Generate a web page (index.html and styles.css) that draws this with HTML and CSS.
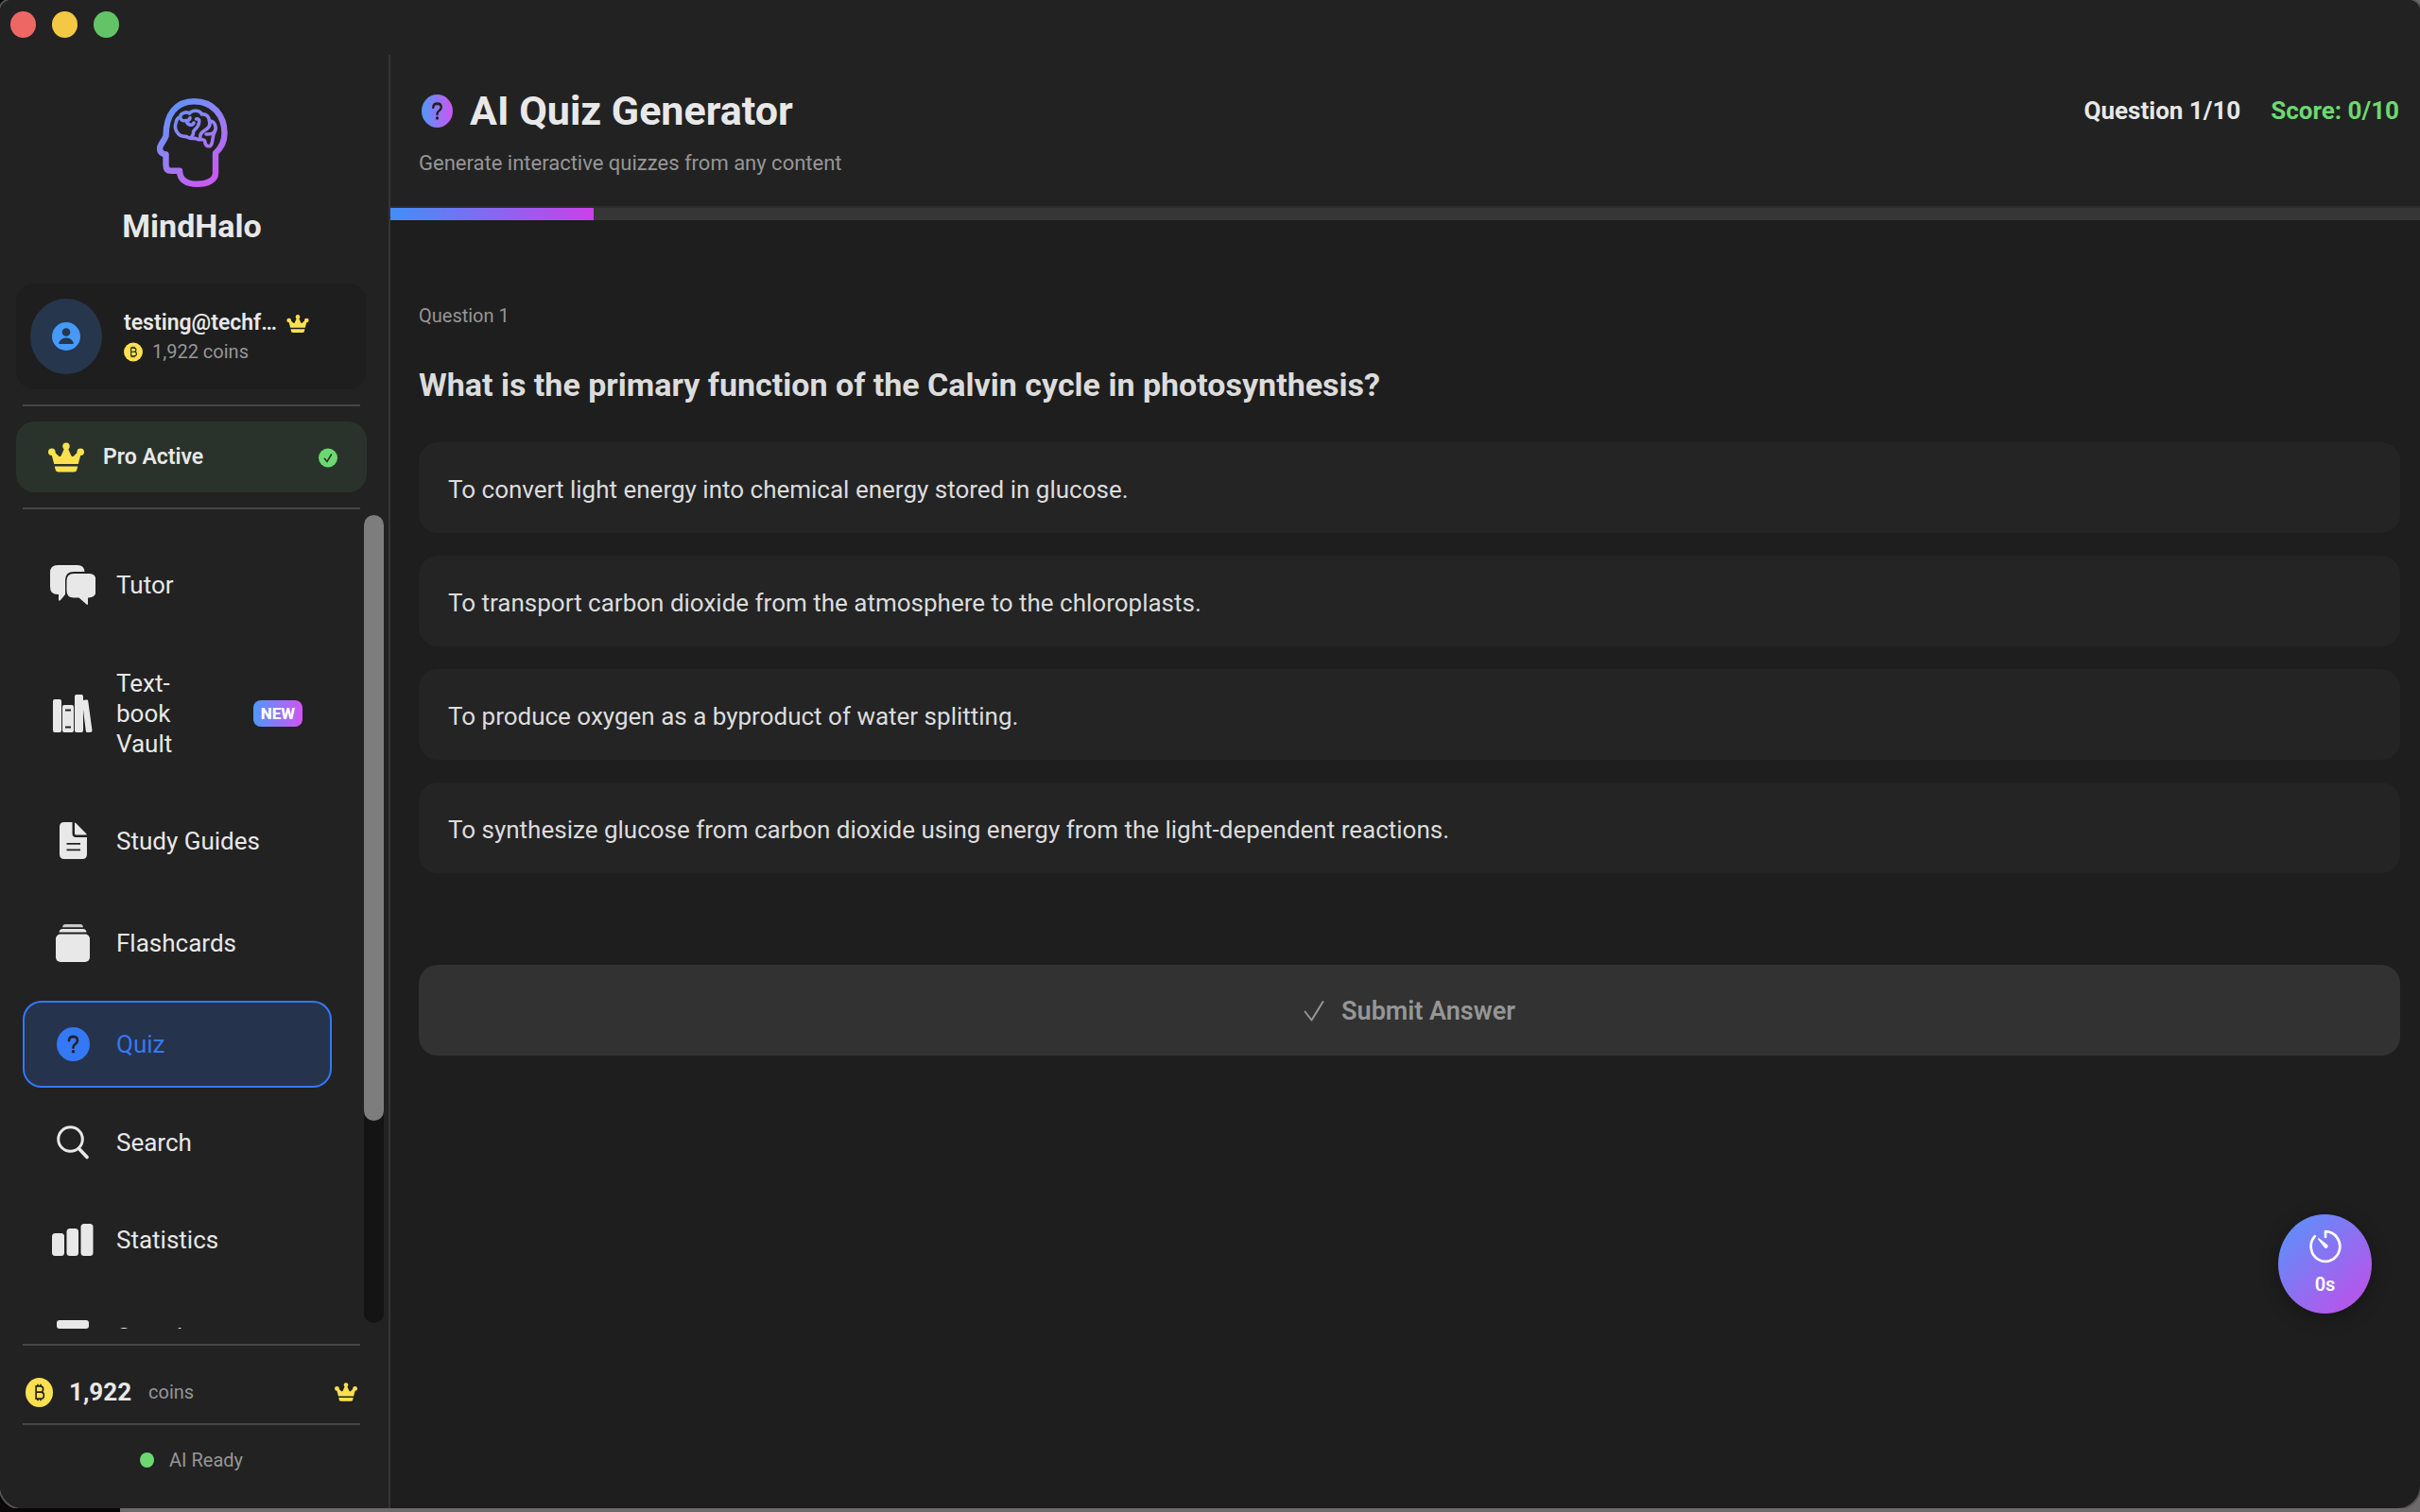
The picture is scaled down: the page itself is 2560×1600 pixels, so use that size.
FILE: index.html
```html
<!DOCTYPE html>
<html lang="en">
<head>
<meta charset="utf-8">
<meta name="viewport" content="width=device-width, initial-scale=1">
<title>MindHalo – AI Quiz Generator</title>
<link rel="stylesheet" href="styles.css">
</head>
<body>
<svg class="defs" width="0" height="0" aria-hidden="true">
  <defs>
    <symbol id="crown" viewBox="0 0 38 31">
      <circle cx="19" cy="3.7" r="3.7"/><circle cx="3.8" cy="9.8" r="3.8"/><circle cx="34.2" cy="9.8" r="3.8"/>
      <path d="M6.2 22.5 3.2 11l3-1.6 5.6 5.4 1.7-.7L18 4h2l4.500 10.100 1.700.7 5.600-5.400 3 1.600-3 11.500z"/>
      <path d="M6.800 25h24.400l-.8 3.500q-.6 2.500-3.400 2.500H11q-2.800 0-3.400-2.500z"/>
    </symbol>
    <symbol id="coin" viewBox="0 0 30 30">
      <circle cx="15" cy="15" r="15"/>
      <path d="M11.500 8.500h4.500q3.300 0 3.300 3.100T16 14.700h-4.500zm0 6.200h5q3.600 0 3.600 3.400t-3.600 3.400h-5zM13.500 6.500v2m3-2v2m-3 13v2m3-2v2" fill="none" stroke="#222" stroke-width="1.700"/>
    </symbol>
    <symbol id="question" viewBox="0 0 36 36">
      <circle cx="18" cy="18" r="18"/>
      <path class="cut" d="M13.300 14.200q.3-4.300 4.800-4.300 4.500.1 4.500 4 0 2.300-2.500 3.900-2.100 1.400-2.100 3.300v.6" fill="none" stroke-width="2.600" stroke-linecap="round"/>
      <circle class="cut-dot" cx="18" cy="25.800" r="1.800"/>
    </symbol>
  </defs>
</svg>

<div class="window">
  <aside class="sidebar">
    <div class="titlebar">
      <button class="light light-close" aria-label="Close"></button>
      <button class="light light-min" aria-label="Minimize"></button>
      <button class="light light-zoom" aria-label="Zoom"></button>
    </div>
    <div class="side-body">
      <div class="brand">
        <svg class="brand-logo" viewBox="0 0 75 94" preserveAspectRatio="none" fill="none" aria-hidden="true">
          <defs><linearGradient id="logoGrad" x1="0" y1="0" x2="75" y2="94" gradientUnits="userSpaceOnUse"><stop offset=".12" stop-color="#6290fb"/><stop offset=".45" stop-color="#9282f5"/><stop offset=".85" stop-color="#c75bf2"/></linearGradient></defs>
          <path d="M9.500 40C9.500 17 20 3.200 39.500 3.200S71.500 18 71.500 37c0 8-3.500 15.500-9.500 21v21c0 8-9 11.800-19.500 11.800S24 87 24 76.800h-9c-4 0-5.500-2.300-5.500-6V59.500C6 59 3 57 3 53c0-4 4.500-7.500 6.500-13z" stroke="url(#logoGrad)" stroke-width="6.400" stroke-linejoin="round"/>
          <g stroke="url(#logoGrad)" stroke-width="3.600" stroke-linecap="round" stroke-linejoin="round">
            <path d="M24.500 20c0-4.500 7.500-6.500 10-4 3-4.500 11.500-3 13 1 4.500-1 8 3 8 7 6 0 8.500 7.500 5 12-1.500 5-1.500 9-2.500 12-1.500 4-5.500 3.500-7-.5 0-2.500-.5-4-3.500-3.800-5.500.5-4-.5-7.500-1.500-8 1.500-6.500-2-10.500-1.800-8 .2-11.500-9-9.500-14 .5-3.200 2-6 4.500-6.400z"/>
            <path d="M24.500 20c.5 3 3 4.500 6.500 3.500 3 .5 4-2 4-3M31 23.500c1.500 6 7 5.500 8 2.500M41.500 22c5-1 3 4.500 2 7-2 4-5 4-5 7.500 0 3-1 3-3 5.500M55.500 24c2 6-2.500 8.500-6.500 11-2.500 2-4 4-3 7.500M61 36c-3 2.500-4.500 2-9 2"/>
          </g>
        </svg>
        <h2 class="brand-name">MindHalo</h2>
      </div>

      <section class="user-card">
        <span class="avatar">
          <svg width="30" height="30" viewBox="0 0 30 30" aria-hidden="true"><circle cx="15" cy="15" r="15" fill="#4699f7"/><circle cx="15" cy="10.500" r="4.300" fill="#26364c"/><path d="M7.500 23q-.8-.8.300-2.500Q10.300 16.500 15 16.500t7.200 4q1.100 1.700.3 2.500z" fill="#26364c"/></svg>
        </span>
        <div class="user-info">
          <div class="user-name">testing@techf…<svg class="gold" width="24" height="19" aria-hidden="true"><use href="#crown"/></svg></div>
          <div class="user-coins"><svg class="gold" width="20" height="21" aria-hidden="true"><use href="#coin"/></svg>1,922 coins</div>
        </div>
      </section>
      <hr class="rule">
      <section class="pro">
        <svg class="gold" width="38" height="32" aria-hidden="true"><use href="#crown"/></svg>
        <span class="pro-text">Pro Active</span>
        <svg width="20" height="21" viewBox="0 0 20 20" aria-hidden="true"><circle cx="10" cy="10" r="10" fill="#6cd970"/><path d="m6.300 10.800 2.700 3 4.500-7.300" fill="none" stroke="#2a332b" stroke-width="1.600" stroke-linecap="round"/></svg>
      </section>
      <hr class="rule">

      <div class="nav-area">
        <nav class="nav">
          <a class="nav-item" href="#tutor">
            <svg class="nav-icon" width="48" height="42" viewBox="0 0 48 42" aria-hidden="true"><path d="M8 0h21q7 0 7.500 7H25q-9 0-9 9v15l-5 6q-2 1.500-2-.5V31H8q-8 0-8-8V8q0-8 8-8z"/><path d="M25 9h16q7.500 0 7.500 7.500V27q0 7.500-7.500 7.500h-1V41q0 1.500-1.500.5l-8-7H25q-7.500 0-7.500-7.500V16.500Q17.500 9 25 9z"/></svg>
            <span class="nav-label">Tutor</span>
          </a>
          <a class="nav-item" href="#vault">
            <svg class="nav-icon" width="42" height="40" viewBox="0 0 42 40" aria-hidden="true"><rect x="0" y="5" width="9" height="35" rx="2"/><path fill-rule="evenodd" d="M12 11h8q2 0 2 2v25q0 2-2 2h-8q-2 0-2-2V13q0-2 2-2zm1 4.500v2h6v-2zm0 18v2h6v-2z"/><rect x="23" y="0" width="9" height="40" rx="2"/><path d="m31.500 6 4-.6q1.500-.2 1.700 1.300L41.500 38q.2 1.600-1.300 1.800l-3.700.2q-1.500 0-1.700-1.500L31 8q-.2-1.800.500-2z"/></svg>
            <span class="nav-label nav-label-narrow">Text&shy;book Vault</span>
            <span class="badge">NEW</span>
          </a>
          <a class="nav-item" href="#guides">
            <svg class="nav-icon" width="29" height="39" viewBox="0 0 29 39" aria-hidden="true"><path fill-rule="evenodd" d="M5 0h8.500v12q0 4 4 4H29v18q0 5-5 5H5q-5 0-5-5V5q0-5 5-5zm2.500 22v1.800h14.500V22zm0 6.500v1.800h14.500v-1.800z"/><path d="M16 .5q.8 0 1.500.8L28 12q.7.700.7 1.500H17.500q-1.500 0-1.500-1.500z"/></svg>
            <span class="nav-label">Study Guides</span>
          </a>
          <a class="nav-item nav-item-tall" href="#flashcards">
            <svg class="nav-icon" width="36" height="40" viewBox="0 0 36 40" aria-hidden="true"><rect y="10.500" width="36" height="29.500" rx="5"/><path d="M7 3.300Q7.500 0 10 0h16q2.500 0 3 3.300z" opacity=".85"/><path d="M3.500 8.500Q4 5 7 5h22q3 0 3.500 3.500z"/></svg>
            <span class="nav-label">Flashcards</span>
          </a>
          <a class="nav-item nav-item-active" href="#quiz" aria-current="page">
            <svg class="nav-icon" width="35" height="36" viewBox="0 0 36 36" preserveAspectRatio="none" aria-hidden="true"><use href="#question"/></svg>
            <span class="nav-label">Quiz</span>
          </a>
          <a class="nav-item" href="#search">
            <svg class="nav-icon nav-icon-line" width="34" height="36" viewBox="0 0 34 36" aria-hidden="true"><circle cx="14.500" cy="14.500" r="12.800" stroke-width="3"/><path d="m23.500 24.500 8.500 9" stroke-width="3.600" stroke-linecap="round"/></svg>
            <span class="nav-label">Search</span>
          </a>
          <a class="nav-item" href="#statistics">
            <svg class="nav-icon" width="44" height="34" viewBox="0 0 44 34" aria-hidden="true"><rect y="10" width="13" height="24" rx="3.500"/><rect x="15.500" y="5" width="12.500" height="29" rx="3.500"/><rect x="30.500" width="13" height="34" rx="3.500"/></svg>
            <span class="nav-label">Statistics</span>
          </a>
          <a class="nav-item" href="#saved">
            <svg class="nav-icon" width="34" height="36" viewBox="0 0 34 36" aria-hidden="true"><rect width="34" height="9" rx="3"/><path d="M2 12h30v18q0 6-6 6H8q-6 0-6-6z"/></svg>
            <span class="nav-label">Saved</span>
          </a>
        </nav>
        <div class="scrollbar" aria-hidden="true"><div class="scroll-thumb"></div></div>
      </div>

      <hr class="rule">
      <div class="balance">
        <svg class="gold" width="29" height="31" viewBox="0 0 30 30" preserveAspectRatio="none" aria-hidden="true"><use href="#coin"/></svg>
        <strong class="balance-value">1,922</strong>
        <span class="balance-unit">coins</span>
        <svg class="gold" width="24" height="20" aria-hidden="true"><use href="#crown"/></svg>
      </div>
      <hr class="rule">
      <div class="status"><span class="status-dot"></span>AI Ready</div>
    </div>
  </aside>

  <main class="main">
    <header class="header">
      <div class="header-row">
        <svg width="33" height="35" viewBox="0 0 36 36" preserveAspectRatio="none" class="title-icon" aria-hidden="true">
          <defs><linearGradient id="titleGrad"><stop stop-color="#4f98fa"/><stop offset="1" stop-color="#cf55f0"/></linearGradient></defs>
          <use href="#question" fill="url(#titleGrad)"/>
        </svg>
        <h1 class="title">AI Quiz Generator</h1>
        <span class="counter">Question 1/10</span>
        <span class="counter counter-score">Score: 0/10</span>
      </div>
      <p class="subtitle">Generate interactive quizzes from any content</p>
    </header>
    <div class="progress" role="progressbar" aria-valuenow="10" aria-valuemin="0" aria-valuemax="100" aria-label="Quiz progress"><div class="progress-fill" style="width:10%"></div></div>

    <section class="quiz">
      <p class="quiz-index">Question 1</p>
      <h2 class="quiz-question">What is the primary function of the Calvin cycle in photosynthesis?</h2>
      <div class="options">
        <button class="option">To convert light energy into chemical energy stored in glucose.</button>
        <button class="option">To transport carbon dioxide from the atmosphere to the chloroplasts.</button>
        <button class="option">To produce oxygen as a byproduct of water splitting.</button>
        <button class="option">To synthesize glucose from carbon dioxide using energy from the light-dependent reactions.</button>
      </div>
      <button class="submit" disabled>
        <svg width="22" height="24" viewBox="0 0 22 24" fill="none" aria-hidden="true"><path d="m1.500 12.500 7 9L20.500 2" stroke="#969696" stroke-width="2" stroke-linecap="round" stroke-linejoin="round"/></svg>
        Submit Answer
      </button>
    </section>
  </main>

  <button class="timer">
    <svg width="34" height="36" viewBox="0 0 34 36" fill="none" aria-hidden="true"><path d="M17 8V2.200A15.300 15.800 0 1 1 5.800 7.200" stroke="#fff" stroke-width="2.700" stroke-linecap="round" stroke-linejoin="round"/><path d="M9.300 9.600q.5-.5 1.200 0l8.500 6.700q1.300 1.500 0 3-1.500 1.300-3 0L9.300 10.800q-.5-.7 0-1.200z" fill="#fff"/></svg>
    0s
  </button>
</div>
</body>
</html>
```
FILE: styles.css
```css
* { box-sizing: border-box; }

body {
  margin: 0;
  background: linear-gradient(90deg, #0b0709 0 127px, #6c6a6b 127px);
  color: #e8e8e8;
  font-family: Roboto, sans-serif;
  font-size: 26px;
  line-height: 32px;
}

h1, h2, p { margin: 0; }
button { font: inherit; color: inherit; border: 0; padding: 0; cursor: pointer; }
svg { flex: none; }
.defs { position: absolute; }
.gold { fill: #fbe14f; }
.cut { stroke: #222; }
.cut-dot { fill: #222; }

.window {
  position: relative;
  display: flex;
  height: calc(100vh - 4px);
  border-radius: 12px 12px 24px 24px;
  box-shadow: 0 0 0 2px #565656;
  background: #1e1e1e;
  overflow: hidden;
}

/* Sidebar */
.sidebar {
  flex: none;
  width: 413px;
  display: flex;
  flex-direction: column;
  background: #222;
}
.titlebar { display: flex; gap: 17px; height: 58px; padding: 12px 11px; flex: none; }
.light { width: 27px; height: 28px; border-radius: 50%; }
.light-close { background: #ee6765; }
.light-min { background: #f4c844; }
.light-zoom { background: #62c466; }

.side-body {
  flex: 1;
  min-height: 0;
  display: flex;
  flex-direction: column;
  border-right: 2px solid #353535;
}
.brand {
  display: flex;
  flex-direction: column;
  align-items: center;
  padding: 46px 5px 40px 0;
  gap: 20px;
}
.brand-logo { width: 75px; height: 94px; }
.brand-name { font-size: 34px; line-height: 42px; font-weight: 700; }

.user-card {
  display: flex;
  align-items: center;
  gap: 23px;
  margin: 0 23px 16px 17px;
  padding: 16px 15px;
  border-radius: 20px;
  background: #1e1e1e;
}
.avatar {
  width: 76px;
  height: 80px;
  border-radius: 50%;
  background: #26364c;
  display: flex;
  align-items: center;
  justify-content: center;
}
.user-name { display: flex; align-items: center; gap: 10px; font-size: 23px; font-weight: 600; }
.user-coins { display: flex; align-items: center; gap: 10px; font-size: 20px; line-height: 28px; color: #969696; }

.rule { flex: none; width: 357px; height: 2px; margin: 0 0 0 24px; border: 0; background: #464646; }

.pro {
  display: flex;
  align-items: center;
  gap: 20px;
  margin: 16px 23px 16px 17px;
  padding: 1px 31px 0 34px;
  height: 75px;
  border-radius: 20px;
  background: #2a332b;
  font-size: 23px;
  font-weight: 600;
}
.pro-text { flex: 1; }

.nav-area { flex: 1; min-height: 0; display: flex; margin-bottom: 16px; overflow: hidden; }
.nav {
  flex: 1;
  display: flex;
  flex-direction: column;
  gap: 13px;
  padding: 32px 34px 0 24px;
  overflow: hidden;
}
.nav-item {
  flex: none;
  display: grid;
  grid-template-columns: 48px 1fr auto;
  align-items: center;
  column-gap: 22px;
  min-height: 90px;
  padding: 27px 31px 27px 29px;
  border-radius: 20px;
  color: inherit;
  text-decoration: none;
}
.nav-item-tall { min-height: 97px; }
.nav-item-active {
  min-height: 92px;
  background: #26334c;
  color: #3478f6;
  box-shadow: inset 0 0 0 2px #3478f6;
}
.nav-item-active .cut { stroke: #26334c; }
.nav-item-active .cut-dot { fill: #26334c; }
.nav-icon { justify-self: center; fill: currentColor; }
.nav-icon-line { fill: none; stroke: currentColor; }
.nav-label-narrow { width: 76px; }
.badge {
  padding: 0 8px;
  border-radius: 8px;
  background: linear-gradient(90deg, #4f98fa, #cf55f0);
  color: #fff;
  font-size: 17px;
  line-height: 28px;
  font-weight: 800;
}
.scrollbar { flex: none; width: 21px; margin: 6px 5px 6px 0; border-radius: 11px; background: #141414; }
.scroll-thumb { height: 75%; border-radius: 11px; background: #7d7d7d; }

.balance { display: flex; align-items: center; height: 82px; padding: 16px 33px 0 27px; }
.balance-value { margin-left: 17px; font-weight: 700; }
.balance-unit { flex: 1; margin-left: 18px; font-size: 20px; color: #969696; }
.status {
  display: flex;
  align-items: center;
  justify-content: center;
  gap: 16px;
  height: 88px;
  padding: 0 6px 14px 0;
  font-size: 20px;
  color: #969696;
}
.status-dot { width: 15px; height: 16px; border-radius: 50%; background: #6cd970; }

/* Main column */
.main { flex: 1; min-width: 0; }
.header { padding: 90px 22px 29px 30px; background: #222; border-bottom: 2px solid #2d2d2d; }
.header-row { display: flex; align-items: center; }
.title-icon { margin: 0 18px 0 3px; }
.title { flex: 1; font-size: 43px; line-height: 54px; font-weight: 700; }
.counter { font-weight: 700; }
.counter-score { margin-left: 32px; color: #6cd970; }
.subtitle { margin-top: 13px; font-size: 22px; color: #969696; }
.progress { height: 13px; background: #363636; }
.progress-fill { height: 100%; background: linear-gradient(90deg, #418ff8, #cb40ec); }

.quiz { display: flex; flex-direction: column; padding: 85px 21px 0 30px; color: #dcdcdc; }
.quiz-index { font-size: 20px; color: #969696; }
.quiz-question { margin: 36px 0 40px; font-size: 34px; line-height: 42px; font-weight: 700; }
.options { display: flex; flex-direction: column; gap: 24px; }
.option {
  min-height: 96px;
  padding: 3px 31px 0;
  border-radius: 20px;
  background: #242424;
  text-align: left;
}
.submit {
  display: flex;
  align-items: center;
  justify-content: center;
  gap: 18px;
  min-height: 96px;
  margin-top: 97px;
  padding-top: 2px;
  border-radius: 20px;
  background: #323232;
  color: #969696;
  font-size: 27px;
  font-weight: 600;
}

/* Floating study timer */
.timer {
  position: absolute;
  right: 51px;
  bottom: 206px;
  width: 99px;
  height: 105px;
  border-radius: 50%;
  display: flex;
  flex-direction: column;
  align-items: center;
  justify-content: center;
  gap: 6px;
  background: linear-gradient(135deg, #5a92fb 5%, #c04fe8 95%);
  box-shadow: 0 4px 20px rgba(0, 0, 0, .3);
  color: #fff;
  font-size: 20px;
  font-weight: 600;
}
```
